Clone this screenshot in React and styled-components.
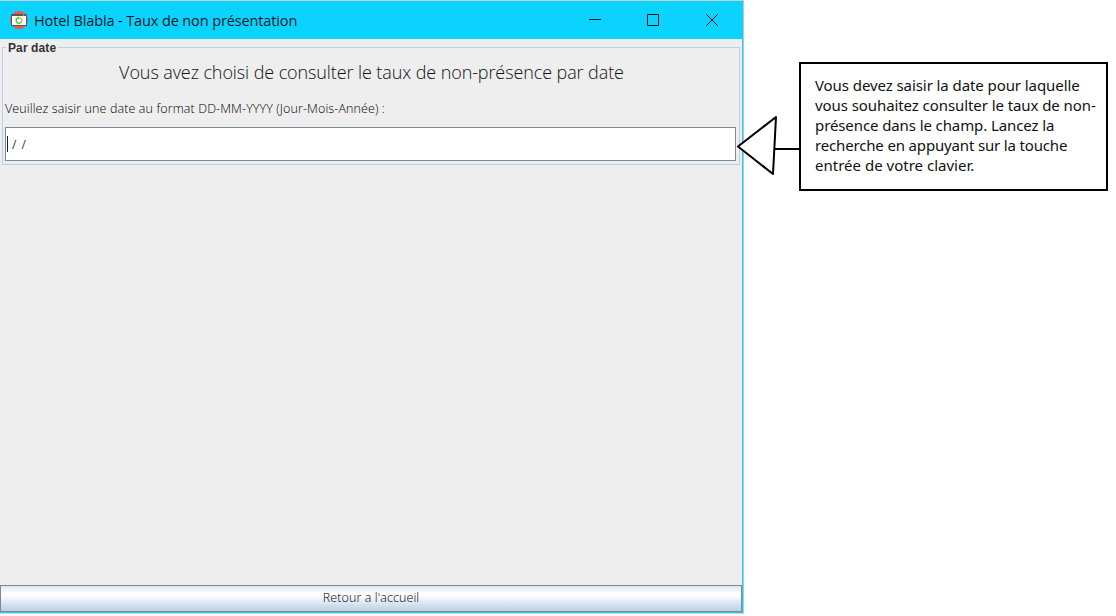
import React from "react";
import styled, { createGlobalStyle } from "styled-components";

const GlobalStyle = createGlobalStyle`
  * { box-sizing: border-box; }
  body { margin: 0; background: #fff; overflow: hidden; }
`;

const Page = styled.main`
  display: flex;
  align-items: flex-start;
  width: 1116px;
  height: 616px;
  background: #fff;
  font-family: "Open Sans", "Noto Sans", sans-serif;
`;

const Window = styled.section`
  display: flex;
  flex-direction: column;
  flex: none;
  width: 744px;
  height: 614px;
  border-top: 1px solid #c4d2d6;
  border-right: 1px solid #b5c8ce;
  border-bottom: 1px solid #c4dce2;
`;

const TitleBar = styled.header`
  display: flex;
  align-items: center;
  flex: none;
  height: 38px;
  padding: 0 24px 0 9px;
  background: #0ad3ff;
`;

const Title = styled.h1`
  flex: 1;
  margin: 2px 0 0 6px;
  color: #03191f;
  font-size: 14.5px;
  font-weight: 400;
  line-height: 20px;
  letter-spacing: -0.12px;
  white-space: nowrap;
`;

const Controls = styled.div`
  display: flex;
  gap: 47px;
  margin-right: 1px;
`;

const Content = styled.div`
  display: flex;
  flex-direction: column;
  flex: 1;
  border-right: 1px solid #0ad3ff;
  border-bottom: 1px solid #2cc5ee;
  background: #eee;
`;

const Group = styled.fieldset`
  display: flex;
  flex-direction: column;
  min-width: 0;
  height: 124px;
  margin: 2px 2px 0;
  padding: 0 3px 3px 2px;
  border: 1px solid #b8cfe5;
`;

const Legend = styled.legend`
  height: 12px;
  margin-left: 1px;
  padding: 0 2px;
  color: #333;
  font: bold 12px/14px "Liberation Sans", sans-serif;
  letter-spacing: 0.1px;
`;

const Heading = styled.h2`
  margin: 7px 0 0;
  padding-left: 2px;
  color: #111;
  font-size: 18px;
  font-weight: 300;
  line-height: 24px;
  letter-spacing: -0.1px;
  text-align: center;
  white-space: nowrap;
`;

const Label = styled.label`
  margin-top: 16px;
  color: #000;
  font-size: 12.5px;
  font-weight: 300;
  line-height: 18px;
  letter-spacing: 0.11px;
  white-space: nowrap;
`;

const DateField = styled.div`
  display: flex;
  align-items: center;
  height: 34px;
  margin-top: 9px;
  padding-left: 1px;
  border: 1px solid #7a8a99;
  background: #fff;
  color: #333;
  font-size: 12px;
  line-height: 16px;
  white-space: pre;
`;

const Caret = styled.span`
  width: 1px;
  height: 16px;
  margin-right: 4px;
  background: #222;
`;

const Mask = styled.span`
  padding-top: 2px;
  word-spacing: 2px;
`;

const BackButton = styled.button`
  height: 27px;
  margin-top: auto;
  padding: 0 0 2px;
  border: 1px solid #7a8a99;
  background: linear-gradient(#dde8f3 0%, #fff 30%, #fff 36%, #b8cfe5 100%);
  color: #000;
  font: 300 12.5px/18px "Open Sans", sans-serif;
  letter-spacing: 0.1px;
`;

const Annotation = styled.aside`
  display: flex;
  align-items: flex-start;
  margin: 62px 0 0 -8px;
`;

const Pointer = styled.svg`
  flex: none;
  margin-top: 52px;
`;

const Note = styled.p`
  width: 309px;
  height: 129px;
  margin: 0;
  padding: 11px 0 0 14px;
  border: 2px solid #000;
  background: #fff;
  color: #111;
  font: 400 15px/20px "Noto Sans", sans-serif;
  white-space: nowrap;
`;

const NoteLine = styled.span`
  display: block;
  letter-spacing: ${(p) => p.$track}px;
`;

const noteLines = [
  ["Vous devez saisir la date pour laquelle", -0.08],
  ["vous souhaitez consulter le taux de non-", -0.08],
  ["présence dans le champ. Lancez la", -0.1],
  ["recherche en appuyant sur la touche", -0.16],
  ["entrée de votre clavier.", 0.01],
];

function AppIcon() {
  return (
    <svg width="19" height="20" viewBox="0 0 19 20">
      <circle cx="10" cy="10" r="9" fill="#f05a34" />
      <path d="M2 4h16v12H2z" fill="#555766" />
      <path d="M3 6h14v9H3z" fill="#fff" />
      <path d="M14 4.5h1v1h-1z" fill="#f4c542" />
      <path d="M16 4.5h1v1h-1z" fill="#e8534f" />
      <path d="M9.3 7.8A2.8 2.8 0 1 0 12.7 11.2" fill="none" stroke="#3ddb3a" strokeWidth="1.4" />
      <path d="M10.8 7.9A2.8 2.8 0 0 1 13 10.7" fill="none" stroke="#f2a035" strokeWidth="1.3" />
      <path d="M9.5 6.5v2.6" fill="none" stroke="#45cb38" />
    </svg>
  );
}

function ControlIcon({ path }) {
  return (
    <svg width="12" height="12" viewBox="0 0 12 12" fill="none" stroke="#001014" overflow="visible">
      <path d={path} />
    </svg>
  );
}

export default function App() {
  return (
    <Page>
      <GlobalStyle />
      <Window>
        <TitleBar>
          <AppIcon />
          <Title>Hotel Blabla - Taux de non présentation</Title>
          <Controls>
            <ControlIcon path="M1 5.5h12" />
            <ControlIcon path="M.5.5h11v11H.5z" />
            <ControlIcon path="M.2.2l11.6 11.6M11.8.2L.2 11.8" />
          </Controls>
        </TitleBar>
        <Content>
          <Group>
            <Legend>Par date</Legend>
            <Heading>Vous avez choisi de consulter le taux de non-présence par date</Heading>
            <Label>Veuillez saisir une date au format DD-MM-YYYY (Jour-Mois-Année) :</Label>
            <DateField>
              <Caret />
              <Mask>/ /</Mask>
            </DateField>
          </Group>
          <BackButton>Retour a l'accueil</BackButton>
        </Content>
      </Window>
      <Annotation>
        <Pointer width="63" height="64" viewBox="0 0 63 64" stroke="#000" strokeWidth="2">
          <path d="M2 32.5L40 3L37 60Z" fill="#fff" strokeLinejoin="round" />
          <path d="M39 35h24" />
        </Pointer>
        <Note>
          {noteLines.map(([text, track]) => (
            <NoteLine key={text} $track={track}>{text}</NoteLine>
          ))}
        </Note>
      </Annotation>
    </Page>
  );
}
